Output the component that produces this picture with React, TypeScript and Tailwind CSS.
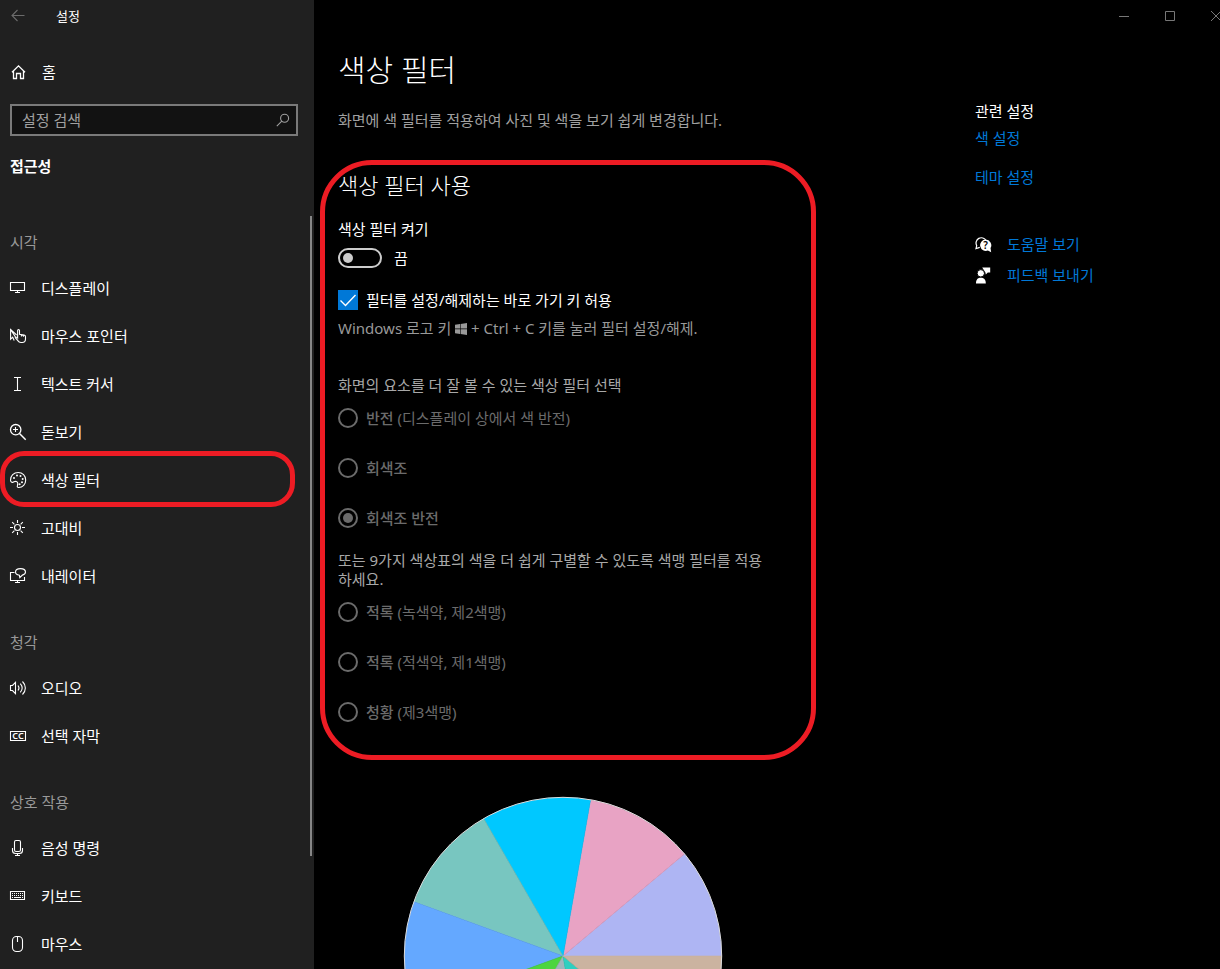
import type { ReactNode } from "react";

function Icon({ children }: { children: ReactNode }) {
  return (
    <svg
      viewBox="0 0 18 18"
      className="size-[18px] shrink-0"
      fill="none"
      stroke="currentColor"
      strokeWidth="1.1"
      aria-hidden="true"
    >
      {children}
    </svg>
  );
}

const icons = {
  home: (
    <Icon>
      <path d="M3 9.300 9.500 2.800 16 9.300M4.500 8v7.500h3v-5h4v5h3V8" strokeWidth="1.3" />
    </Icon>
  ),
  display: (
    <Icon>
      <path d="M1.500 3.500h14v8h-14zM8.500 11.500v2M6 13.500h5" />
    </Icon>
  ),
  pointer: (
    <Icon>
      <path d="M7.600 8 1.600 2.400v9.800l2.100-2 1.500 3.200M1.600 2.400l5 7.800" />
      <path d="M8.600 10.600V3.400a.95.95 0 0 1 1.900 0v3.800l4.700.9c.9.2 1.300.8 1.300 1.600v2c0 2.300-1.300 3.800-3.300 3.800h-1.300c-1.500 0-2.400-.8-3.100-1.900L6.300 10.700c.7-.8 1.600-.5 2.300.3zM12.400 7.500v2M14.400 7.900v1.800" />
    </Icon>
  ),
  text: (
    <Icon>
      <path d="M5 2.500h7M5 15.500h7M8.500 2.500v13" />
    </Icon>
  ),
  magnifier: (
    <Icon>
      <circle cx="6.700" cy="6.700" r="5.200" strokeWidth="1.300" />
      <path d="m10.500 10.500 6.200 6.200" strokeWidth="1.500" />
      <path d="M4 6.500h5M6.500 4v5" />
    </Icon>
  ),
  palette: (
    <Icon>
      <path d="M1.500 9.300C1.300 4.800 4.900 1.500 9.200 1.500c4.300 0 7.500 3.300 7.500 7.500 0 4.200-3 7.500-7 7.500-1.300 0-1.700-.7-1.300-1.700.5-1.400.5-3.400-.7-4.200-1.300-.8-2.300.1-3.500.6-1.400.5-2.600-.3-2.700-1.900z" />
      <g fill="currentColor" stroke="none">
        <circle cx="5" cy="7" r="1" />
        <circle cx="8" cy="4.600" r="1" />
        <circle cx="11.500" cy="5" r="1" />
        <circle cx="13.700" cy="8" r="1" />
        <circle cx="13" cy="11.300" r="1" />
        <circle cx="10.600" cy="13.300" r="1" />
      </g>
    </Icon>
  ),
  sun: (
    <Icon>
      <circle cx="8.500" cy="8.500" r="3" />
      <path d="M8.500 1v3M8.500 13v3M1 8.500h3M13 8.500h3M3.200 3.200l2.200 2.200M11.600 11.600l2.200 2.200M3.200 13.800l2.200-2.200M11.600 5.400l2.200-2.200" />
    </Icon>
  ),
  narrator: (
    <Icon>
      <path d="M5.500 5.500h-4v8h14V10M8.500 13.500v2M6 15.500h5" />
      <path d="M10.400 8.200C8.400 7.900 6.500 7 6.500 5c0-2.200 2.300-3.400 5-3.400s5 1.200 5 3.400c0 1.500-1.300 2.600-3.100 3.100l-2.600 2.500z" />
    </Icon>
  ),
  audio: (
    <Icon>
      <path d="M1.500 6.500h2l3-3.200v11.400l-3-3.200h-2zM9 6.500c1.200 1.500 1.200 3.500 0 5M11.300 4.600c2.200 2.600 2.200 6.200 0 8.800M13.500 2.500c3.800 3.800 3.800 9.200 0 13" />
    </Icon>
  ),
  captions: (
    <Icon>
      <path d="M1.500 4.500h15v9h-15z" />
      <text
        x="9"
        y="12"
        textAnchor="middle"
        fill="currentColor"
        stroke="none"
        fontSize="9"
        fontWeight="600"
        fontFamily="Noto Sans, sans-serif"
      >
        CC
      </text>
    </Icon>
  ),
  microphone: (
    <Icon>
      <rect x="5.500" y="1.500" width="6" height="11" rx="1.500" />
      <path d="M3.500 9v2.500c0 2 1 3 3 3h4c2 0 3-1 3-3V9M8.500 14.500v2M6 16.500h5" />
    </Icon>
  ),
  keyboard: (
    <Icon>
      <path d="M1.500 4.500h14v8h-14z" />
      <path d="M3 6.500h11M3 8.500h11" strokeDasharray="1 1" />
      <path d="M3 10.500h1M5 10.500h7M13 10.500h1" />
    </Icon>
  ),
  mouse: (
    <Icon>
      <rect x="3.500" y="1.500" width="10" height="15" rx="4" />
      <path d="M8.500 1.500V7" />
    </Icon>
  ),
};

type NavItem = { label: string; icon: ReactNode; current?: boolean };

const groups: { title: string; items: NavItem[] }[] = [
  {
    title: "시각",
    items: [
      { label: "디스플레이", icon: icons.display },
      { label: "마우스 포인터", icon: icons.pointer },
      { label: "텍스트 커서", icon: icons.text },
      { label: "돋보기", icon: icons.magnifier },
      { label: "색상 필터", icon: icons.palette, current: true },
      { label: "고대비", icon: icons.sun },
      { label: "내레이터", icon: icons.narrator },
    ],
  },
  {
    title: "청각",
    items: [
      { label: "오디오", icon: icons.audio },
      { label: "선택 자막", icon: icons.captions },
    ],
  },
  {
    title: "상호 작용",
    items: [
      { label: "음성 명령", icon: icons.microphone },
      { label: "키보드", icon: icons.keyboard },
      { label: "마우스", icon: icons.mouse },
    ],
  },
];

function Sidebar() {
  return (
    <aside className="flex w-[314px] shrink-0 flex-col bg-[#202020]">
      <header className="flex h-8 shrink-0 items-center pl-[9px]">
        <button type="button" aria-label="뒤로" className="text-[#6b6b6b]">
          <Icon>
            <path d="M3 8.500h12.500M8.500 3 3 8.500 8.500 14" />
          </Icon>
        </button>
        <span className="ml-[29px] text-[13px]">설정</span>
      </header>
      <a href="#home" className="mt-4 flex h-12 shrink-0 items-center gap-[15px] pl-[9px]">
        {icons.home}홈
      </a>
      <div className="mt-2 mr-4 ml-[10px] flex h-8 shrink-0 items-center border-2 border-[#7a7a7a] bg-[#121212] pr-[6px] pl-[10px]">
        <input
          type="text"
          aria-label="설정 검색"
          placeholder="설정 검색"
          className="min-w-0 flex-1 bg-transparent outline-none placeholder:text-[#a0a0a0]"
        />
        <svg viewBox="0 0 14 14" className="size-[14px] text-[#a0a0a0]" fill="none" stroke="currentColor" strokeWidth="1.1" aria-hidden="true">
          <circle cx="8.600" cy="5.200" r="4" />
          <path d="M5.800 8.200.8 13.200" />
        </svg>
      </div>
      <h2 className="mt-5 shrink-0 pl-[10px] font-bold">접근성</h2>
      <div className="mt-6 flex min-h-0 flex-1">
        <nav className="min-w-0 flex-1 overflow-y-auto [scrollbar-width:none]">
          {groups.map((group) => (
            <section key={group.title}>
              <h3 className="pt-8 pb-3 pl-[10px] text-[#999999]">{group.title}</h3>
              <ul>
                {group.items.map((item) => (
                  <li key={item.label} className="relative">
                    <a
                      href={`#${item.label}`}
                      aria-current={item.current ? "page" : undefined}
                      className="flex h-12 items-center gap-[14px] pl-[9px]"
                    >
                      {item.icon}
                      {item.label}
                    </a>
                    {item.current && (
                      <span className="pointer-events-none absolute -top-[5px] right-[15px] -bottom-[3px] left-0 rounded-[24px] border-[5px] border-[#ed1c24]" />
                    )}
                  </li>
                ))}
              </ul>
            </section>
          ))}
        </nav>
        <div className="mt-4 mr-[2px] h-[640px] w-[2px] shrink-0 bg-[#868686]" />
      </div>
    </aside>
  );
}

function WindowButtons() {
  return (
    <div className="flex h-8 shrink-0 justify-end text-[#777777]">
      <button type="button" aria-label="최소화" className="flex w-[46px] items-center justify-center">
        <svg viewBox="0 0 10 10" className="size-[10px]" stroke="currentColor" aria-hidden="true">
          <path d="M0 5.500h10" />
        </svg>
      </button>
      <button type="button" aria-label="최대화" className="flex w-[46px] items-center justify-center">
        <svg viewBox="0 0 10 10" className="size-[10px]" fill="none" stroke="currentColor" aria-hidden="true">
          <path d="M.5.5h9v9h-9z" />
        </svg>
      </button>
      <button type="button" aria-label="닫기" className="flex w-[27px] items-center overflow-hidden pl-[18px]">
        <svg viewBox="0 0 10 10" className="size-[10px] shrink-0" stroke="currentColor" aria-hidden="true">
          <path d="m0 0 10 10M10 0 0 10" />
        </svg>
      </button>
    </div>
  );
}

type Option = { id: string; name: string; detail?: string; checked?: boolean };

const toneFilters: Option[] = [
  { id: "invert", name: "반전", detail: "(디스플레이 상에서 색 반전)" },
  { id: "gray", name: "회색조" },
  { id: "gray-invert", name: "회색조 반전", checked: true },
];

const visionFilters: Option[] = [
  { id: "deuter", name: "적록", detail: "(녹색약, 제2색맹)" },
  { id: "prot", name: "적록", detail: "(적색약, 제1색맹)" },
  { id: "trit", name: "청황", detail: "(제3색맹)" },
];

function RadioList({ options }: { options: Option[] }) {
  return (
    <div className="mt-[13px] flex flex-col gap-[30px] text-[#6b6b6b]">
      {options.map((o) => (
        <div key={o.id} className="flex h-5 items-center gap-2">
          <input
            type="radio"
            id={o.id}
            name="filter"
            disabled
            defaultChecked={o.checked}
            className="flex size-5 shrink-0 appearance-none items-center justify-center rounded-full border-2 border-[#6b6b6b] checked:before:size-[10px] checked:before:rounded-full checked:before:bg-[#6b6b6b] checked:before:content-['']"
          />
          <label htmlFor={o.id}>
            <span className="font-medium">{o.name}</span>
            {o.detail && ` ${o.detail}`}
          </label>
        </div>
      ))}
    </div>
  );
}

const sliceColors = [
  "#aeb5f3",
  "#e8a3c4",
  "#00c8ff",
  "#78c6c0",
  "#64a8ff",
  "#4cd53f",
  "#9fb6bc",
  "#2fcfc0",
  "#cbb3a0",
];

function ColorWheel() {
  const point = (i: number) => {
    const a = (i * 40 * Math.PI) / 180;
    return `${(160 + 158.5 * Math.cos(a)).toFixed(2)} ${(160 - 158.5 * Math.sin(a)).toFixed(2)}`;
  };
  return (
    <svg viewBox="0 0 320 320" className="mt-[74px] ml-[65px] size-[320px] shrink-0" role="img" aria-label="색상표">
      {sliceColors.map((c, i) => (
        <path
          key={c}
          fill={c}
          stroke={c}
          strokeWidth="0.6"
          strokeLinejoin="round"
          d={`M160 160 L${point(i)} A158.5 158.5 0 0 0 ${point(i + 1)}Z`}
        />
      ))}
      <circle cx="160" cy="160" r="158.700" fill="none" stroke="#dddddd" />
    </svg>
  );
}

function Related() {
  return (
    <aside className="w-[245px] shrink-0 pt-[69px]">
      <h2>관련 설정</h2>
      <div className="mt-[7px] flex flex-col items-start gap-[19px] text-[#0078d7]">
        <a href="#color">색 설정</a>
        <a href="#theme">테마 설정</a>
      </div>
      <ul className="mt-[47px] flex flex-col gap-[11px]">
        <li className="flex items-center gap-[15px]">
          <svg viewBox="0 0 17 17" className="size-[17px]" aria-hidden="true">
            <path d="M4.800 11.400 1 12.600l.7-3A5 5 0 1 1 11 4.500" fill="none" stroke="currentColor" strokeWidth="1.200" />
            <path d="M10.600 3.500a5.700 5.700 0 0 1 4.900 8.600l.7 4.200-3.300-1.800A5.700 5.700 0 1 1 10.600 3.500z" fill="currentColor" />
            <text x="10.600" y="12.800" textAnchor="middle" fill="#000" fontSize="10" fontWeight="600" fontFamily="Noto Sans, sans-serif">
              ?
            </text>
          </svg>
          <a href="#help" className="text-[#0078d7]">도움말 보기</a>
        </li>
        <li className="flex items-center gap-[15px]">
          <svg viewBox="0 0 17 17" className="size-[17px]" fill="currentColor" aria-hidden="true">
            <path d="M7.200.5h8v5h-2.400l-2 2-.4-2z" />
            <circle cx="5.800" cy="6.300" r="3.700" stroke="#000" />
            <path d="M1 16.500c0-4 1.800-5.700 4.800-5.700s5 1.700 5 5.700z" />
          </svg>
          <a href="#feedback" className="text-[#0078d7]">피드백 보내기</a>
        </li>
      </ul>
    </aside>
  );
}

export default function App() {
  return (
    <div className="flex h-screen overflow-hidden bg-black font-['Noto_Sans','Noto_Sans_CJK_KR',sans-serif] text-[15px] leading-5 text-white">
      <Sidebar />
      <div className="flex min-w-0 flex-1 flex-col">
        <WindowButtons />
        <div className="flex min-h-0 flex-1 overflow-y-auto pl-6 [scrollbar-width:none]">
          <main className="min-w-0 flex-1 pt-[18px]">
            <h1 className="text-[30px] leading-10 font-light">색상 필터</h1>
            <p className="mt-5 text-[#a0a0a0]">
              화면에 색 필터를 적용하여 사진 및 색을 보기 쉽게 변경합니다.
            </p>
            <section className="relative mt-[42px] max-w-[460px]">
              <h2 className="text-[22px] leading-[26px] font-light">색상 필터 사용</h2>
              <label htmlFor="use-filter" className="mt-[21px] block">
                색상 필터 켜기
              </label>
              <div className="mt-[9px] flex h-5 items-center gap-3">
                <input
                  type="checkbox"
                  role="switch"
                  id="use-filter"
                  className="flex h-5 w-11 appearance-none items-center rounded-full border-2 border-[#cccccc] pl-[3px] before:size-[10px] before:rounded-full before:bg-[#cccccc] before:content-[''] checked:justify-end checked:pr-[3px]"
                />
                <span>끔</span>
              </div>
              <div className="mt-[22px] flex h-5 items-center gap-2">
                <span className="relative flex size-5">
                  <input
                    type="checkbox"
                    id="shortcut"
                    defaultChecked
                    className="peer size-5 appearance-none border-2 border-[#cccccc] checked:border-0 checked:bg-[#0078d7]"
                  />
                  <svg
                    viewBox="0 0 20 20"
                    className="pointer-events-none absolute inset-0 hidden size-5 peer-checked:block"
                    fill="none"
                    stroke="currentColor"
                    strokeWidth="1.400"
                    aria-hidden="true"
                  >
                    <path d="m2.500 10.500 5 5 10-10.500" />
                  </svg>
                </span>
                <label htmlFor="shortcut">필터를 설정/해제하는 바로 가기 키 허용</label>
              </div>
              <p className="mt-2 text-[#999999]">
                Windows 로고 키{" "}
                <svg viewBox="0 0 12 12" className="inline-block size-3 align-[-1px]" fill="currentColor" role="img" aria-label="Windows">
                  <path d="M0 1.700 5 1v4.600H0zM5.600.9 12 0v5.600H5.600zM0 6.300h5V11l-5-.7zM5.600 6.300H12V12l-6.400-.9z" />
                </svg>{" "}
                + Ctrl + C 키를 눌러 필터 설정/해제.
              </p>
              <p className="mt-[37px] text-[#a8a8a8]">화면의 요소를 더 잘 볼 수 있는 색상 필터 선택</p>
              <RadioList options={toneFilters} />
              <p className="mt-[23px] max-w-[432px] leading-[19px] text-[#a8a8a8]">
                또는 9가지 색상표의 색을 더 쉽게 구별할 수 있도록 색맹 필터를 적용하세요.
              </p>
              <RadioList options={visionFilters} />
              <span className="pointer-events-none absolute -top-3 -right-[18px] -bottom-[38px] -left-[18px] rounded-[52px] border-[5px] border-[#ed1c24]" />
            </section>
            <ColorWheel />
          </main>
          <Related />
        </div>
      </div>
    </div>
  );
}
